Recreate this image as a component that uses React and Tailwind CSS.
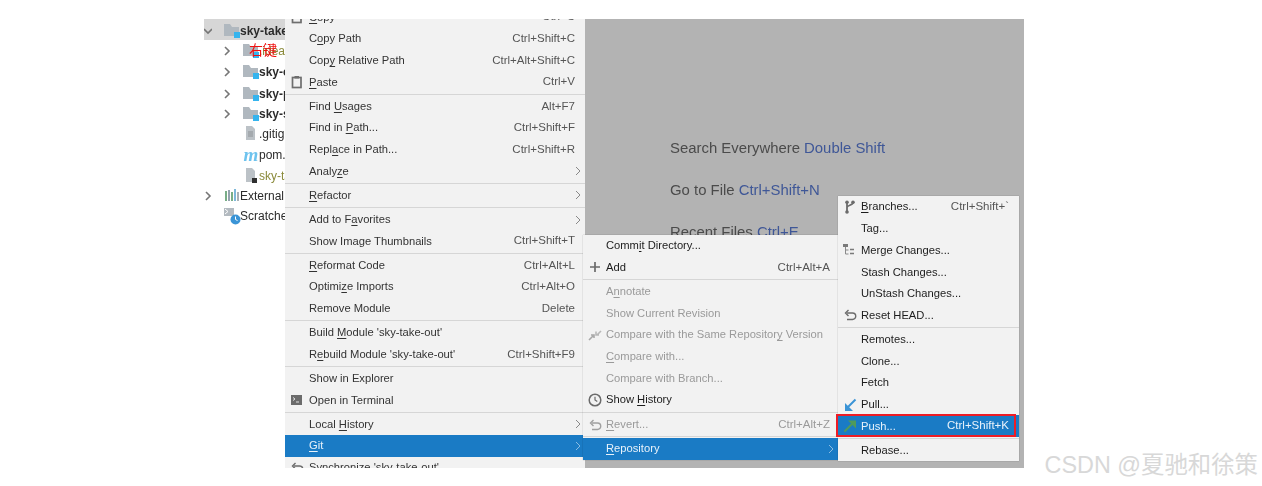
import React from "react";

const FONT = "font-['Liberation_Sans',Arial,sans-serif]";

// "_" marks the letter that gets the mnemonic underline
const Label = ({ text }) => {
  const i = text.indexOf("_");
  if (i < 0) return <span>{text}</span>;
  return (
    <span>
      {text.slice(0, i)}
      <span className="underline underline-offset-2">{text[i + 1]}</span>
      {text.slice(i + 2)}
    </span>
  );
};

const Chevron = () => (
  <svg width="6" height="10" viewBox="0 0 6 10" className="absolute right-[4px] top-[6px]">
    <path d="M1 1l4 4-4 4" fill="none" stroke="currentColor" strokeWidth="1" opacity="0.55" />
  </svg>
);

const Sep = ({ h = "h-[2.4px]" }) => <div className={`${h} flex items-center`}><div className="h-px w-full bg-[#d6d6d6]" /></div>;

const Row = ({ text, keys, icon, sub, active, disabled, dark, pad = "pl-[24px] pr-[10px]" }) => (
  <div
    className={`relative flex h-[21.7px] items-center justify-between whitespace-nowrap text-[11.2px] ${pad} ${
      active ? "bg-[#1a7bc5] text-[#e8f2fa]" : disabled ? "text-[#9a9a9a]" : dark ? "text-[#1c1c1c]" : "text-[#333333]"
    }`}
  >
    {icon && <span className="absolute left-[4px] top-[3px] flex h-4 w-4 items-center justify-center">{icon}</span>}
    <Label text={text} />
    {keys && <span className={`text-[11.5px] ${active ? "" : disabled ? "text-[#9a9a9a]" : "text-[#555555]"}`}>{keys}</span>}
    {sub && <Chevron />}
  </div>
);

const PasteIcon = () => (
  <svg width="12" height="14" viewBox="0 0 12 14">
    <rect x="1.5" y="2.5" width="8.5" height="10" fill="none" stroke="#6e6e6e" strokeWidth="1.7" />
    <rect x="3.5" y="1" width="4.5" height="2.5" fill="#6e6e6e" />
  </svg>
);
const TerminalIcon = () => (
  <svg width="12" height="12" viewBox="0 0 12 12">
    <rect width="11" height="10" y="1" fill="#6b6b6b" />
    <path d="M2 3.5l2 1.5-2 1.5M5 8h3" stroke="#eeeeee" strokeWidth="0.9" fill="none" />
  </svg>
);
const PlusIcon = () => (
  <svg width="12" height="12" viewBox="0 0 12 12">
    <path d="M6 1v10M1 6h10" stroke="#6b6b6b" strokeWidth="1.7" />
  </svg>
);
const ClockIcon = () => (
  <svg width="14" height="14" viewBox="0 0 14 14">
    <circle cx="7" cy="7" r="5.8" fill="none" stroke="#6b6b6b" strokeWidth="1.5" />
    <path d="M7 3.8V7l2.3 1.6" fill="none" stroke="#6b6b6b" strokeWidth="1.2" />
  </svg>
);
const UndoIcon = ({ color = "#6b6b6b" }) => (
  <svg width="13" height="12" viewBox="0 0 13 12">
    <path d="M3 4h5.5a3 3 0 0 1 0 6.5H3" fill="none" stroke={color} strokeWidth="1.4" />
    <path d="M4.5 1L1.5 4l3 3" fill="none" stroke={color} strokeWidth="1.4" />
  </svg>
);
const CompareIcon = () => (
  <svg width="14" height="14" viewBox="0 0 14 14">
    <path d="M1 12l4-4M3 7h3v3" fill="none" stroke="#a8a8a8" strokeWidth="1.6" />
    <path d="M13 3L9 7M8 3.5V7h3" fill="none" stroke="#b8b8b8" strokeWidth="1.6" />
  </svg>
);
const BranchIcon = () => (
  <svg width="12" height="14" viewBox="0 0 12 14">
    <path d="M3 2v10M9 2.5c0 3-6 2.5-6 5" fill="none" stroke="#6b6b6b" strokeWidth="1.8" />
    <circle cx="3" cy="2.2" r="1.8" fill="#6b6b6b" />
    <circle cx="3" cy="12" r="1.8" fill="#6b6b6b" />
    <circle cx="9" cy="2.2" r="1.8" fill="#6b6b6b" />
  </svg>
);
const MergeIcon = () => (
  <svg width="15" height="12" viewBox="0 0 15 12">
    <rect x="0" y="0" width="5" height="3" fill="#7a7a7a" />
    <path d="M2.5 3v7h3M2.5 6h3" stroke="#8a8a8a" fill="none" />
    <path d="M7 5.5h4M7 9.5h4" stroke="#7a7a7a" strokeWidth="1.6" />
  </svg>
);
const PullIcon = () => (
  <svg width="14" height="14" viewBox="0 0 14 14">
    <path d="M12.5 1.5L3 11" stroke="#3a94d6" strokeWidth="2" />
    <path d="M2 5v8h8z" fill="#3a94d6" />
  </svg>
);
const PushIcon = () => (
  <svg width="14" height="14" viewBox="0 0 14 14">
    <path d="M1.5 12.5L11 3" stroke="#4f9a5c" strokeWidth="2" />
    <path d="M5 1.5h8v8z" fill="#4f9a5c" />
  </svg>
);

const ModuleFolder = () => (
  <svg width="16" height="14" viewBox="0 0 16 14" className="shrink-0">
    <path d="M0 0h6l2 3h7v9H0z" fill="#b0b8bf" />
    <rect x="10" y="8" width="6" height="6" fill="#35b4ee" />
  </svg>
);
const FileIcon = ({ badge }) => (
  <svg width="14" height="15" viewBox="0 0 14 15" className="shrink-0">
    <path d="M2 0h6l3 3v11H2z" fill="#bcc2c7" />
    {!badge && <path d="M4 6h5M4 8h5M4 10h5" stroke="#8d9296" />}
    {badge && <rect x="8" y="10" width="5" height="5" fill="#2f2f2f" />}
  </svg>
);
const Arrow = ({ open }) => (
  <svg width="8" height="10" viewBox="0 0 8 10" className="shrink-0">
    <path d={open ? "M0 3l4 4 4-4" : "M2 1l4 4-4 4"} fill="none" stroke="#767676" strokeWidth="1.6" />
  </svg>
);
const LibIcon = () => (
  <svg width="15" height="14" viewBox="0 0 15 14" className="shrink-0">
    <path d="M1 2v10" stroke="#6aa57a" strokeWidth="1.8" />
    <path d="M4 1v11" stroke="#8a99a6" strokeWidth="1.8" />
    <path d="M7 3v9" stroke="#6aa57a" strokeWidth="1.8" />
    <path d="M10 0v12" stroke="#6fb1d6" strokeWidth="1.8" />
    <path d="M13 3v9" stroke="#a0a9b0" strokeWidth="1.8" />
  </svg>
);
const ScratchIcon = () => (
  <svg width="17" height="17" viewBox="0 0 17 17" className="shrink-0">
    <rect x="0" y="0" width="10" height="8" fill="#b3bac0" />
    <path d="M1 1l3 2.5-3 2.5" stroke="#ffffff" fill="none" />
    <circle cx="11.5" cy="11.5" r="5" fill="#3a94d6" />
    <path d="M11.5 8.5v3l2 1" stroke="#ffffff" fill="none" />
  </svg>
);

const TreeRow = ({ h, indent, arrow, open, icon, children }) => (
  <div className={`flex items-center whitespace-nowrap text-[12px] ${h} ${indent}`}>
    <span className="flex w-[20px] shrink-0">{arrow && <Arrow open={open} />}</span>
    <span className="flex w-[16px] shrink-0 justify-center">{icon}</span>
    <span>{children}</span>
  </div>
);

export default function App() {
  return (
    <div className={`relative h-[486px] w-[1262px] overflow-hidden bg-white pl-[204px] pt-[19px] ${FONT}`}>
      <div className="flex h-[449px] w-[820px] overflow-hidden bg-[#b3b3b3] blur-[0.3px]">
        {/* project tree */}
        <div className="w-[81px] shrink-0 overflow-hidden bg-white text-[#2b2b2b]">
          <TreeRow h="h-[21px] bg-[#d6d6d6] pt-[2px]" indent="pl-0" arrow open icon={<ModuleFolder />}><b>sky-take-out</b></TreeRow>
          <div className="relative h-[21px]">
            <TreeRow h="h-[21px]" indent="pl-[19px]" arrow icon={<ModuleFolder />}><span className="text-[#8a8a3a]">.idea</span></TreeRow>
            <span className="absolute left-[45px] top-0 font-['Noto_Sans_CJK_SC',sans-serif] text-[14px] leading-[18px] text-[#f01010]">右键</span>
          </div>
          <TreeRow h="h-[22px]" indent="pl-[19px]" arrow icon={<ModuleFolder />}><b>sky-common</b></TreeRow>
          <TreeRow h="h-[21px]" indent="pl-[19px]" arrow icon={<ModuleFolder />}><b>sky-pojo</b></TreeRow>
          <TreeRow h="h-[19px]" indent="pl-[19px]" arrow icon={<ModuleFolder />}><b>sky-server</b></TreeRow>
          <TreeRow h="h-[21px]" indent="pl-[19px]" icon={<FileIcon />}>.gitignore</TreeRow>
          <TreeRow h="h-[21px]" indent="pl-[19px]" icon={<span className="font-['Liberation_Serif',serif] text-[19px] font-bold italic leading-none text-[#6ec3ee]">m</span>}>pom.xml</TreeRow>
          <TreeRow h="h-[21px]" indent="pl-[19px]" icon={<FileIcon badge />}><span className="text-[#8a8a3a]">sky-take-out.iml</span></TreeRow>
          <TreeRow h="h-[20px]" indent="pl-0" arrow icon={<LibIcon />}>External Libraries</TreeRow>
          <TreeRow h="h-[20px]" indent="pl-0" arrow={false} icon={<ScratchIcon />}>Scratches</TreeRow>
        </div>

        {/* main context menu, cut off by the screenshot at top and bottom */}
        <div className="w-[300px] shrink-0 overflow-hidden bg-[#f2f2f2]">
          <div className="-mt-[12.8px]">
            <Row text="_Copy" keys="Ctrl+C" icon={<PasteIcon />} />
            <Row text="C_opy Path" keys="Ctrl+Shift+C" />
            <Row text="Cop_y Relative Path" keys="Ctrl+Alt+Shift+C" />
            <Row text="_Paste" keys="Ctrl+V" icon={<PasteIcon />} />
            <Sep />
            <Row text="Find _Usages" keys="Alt+F7" />
            <Row text="Find in _Path..." keys="Ctrl+Shift+F" />
            <Row text="Repl_ace in Path..." keys="Ctrl+Shift+R" />
            <Row text="Analy_ze" sub />
            <Sep />
            <Row text="_Refactor" sub />
            <Sep />
            <Row text="Add to F_avorites" sub />
            <Row text="Show Image Thumbnails" keys="Ctrl+Shift+T" />
            <Sep />
            <Row text="_Reformat Code" keys="Ctrl+Alt+L" />
            <Row text="Optimi_ze Imports" keys="Ctrl+Alt+O" />
            <Row text="Remove Module" keys="Delete" />
            <Sep />
            <Row text="Build _Module 'sky-take-out'" />
            <Row text="R_ebuild Module 'sky-take-out'" keys="Ctrl+Shift+F9" />
            <Sep />
            <Row text="Show in Explorer" />
            <Row text="Open in Terminal" icon={<TerminalIcon />} />
            <Sep />
            <Row text="Local _History" sub />
            <Row text="_Git" sub active />
            <Row text="Synchronize 'sky-take-out'" icon={<UndoIcon />} />
          </div>
        </div>

        {/* editor placeholder */}
        <div className="relative flex-1">
          <div className="flex flex-col gap-[22px] pl-[85px] pt-[119px] text-[14.9px] leading-[20px] text-[#4b4b4b]">
            <div>Search Everywhere <span className="text-[#3f5797]">Double Shift</span></div>
            <div>Go to File <span className="text-[#3f5797]">Ctrl+Shift+N</span></div>
            <div>Recent Files <span className="text-[#3f5797]">Ctrl+E</span></div>
          </div>

          {/* Git submenu */}
          <div className="absolute left-[-2px] top-[215.8px] w-[255px] bg-[#f2f2f2] shadow-[0_0_1px_rgba(0,0,0,0.35)]">
            <Row dark pad="pl-[23px] pr-[8px]" text="Comm_it Directory..." />
            <Row dark pad="pl-[23px] pr-[8px]" text="Add" keys="Ctrl+Alt+A" icon={<PlusIcon />} />
            <Sep />
            <Row disabled pad="pl-[23px] pr-[8px]" text="A_nnotate" />
            <Row disabled pad="pl-[23px] pr-[8px]" text="Show Current Revision" />
            <Row disabled pad="pl-[23px] pr-[8px]" text="Compare with the Same Repositor_y Version" icon={<CompareIcon />} />
            <Row disabled pad="pl-[23px] pr-[8px]" text="_Compare with..." />
            <Row disabled pad="pl-[23px] pr-[8px]" text="Compare with Branch..." />
            <Row dark pad="pl-[23px] pr-[8px]" text="Show _History" icon={<ClockIcon />} />
            <Sep h="h-[3px]" />
            <Row disabled pad="pl-[23px] pr-[8px]" text="_Revert..." keys="Ctrl+Alt+Z" icon={<UndoIcon color="#a0a0a0" />} />
            <Sep h="h-[2.5px]" />
            <Row active pad="pl-[23px] pr-[8px]" text="_Repository" sub />
          </div>

          {/* Repository submenu */}
          <div className="absolute left-[253px] top-[177px] w-[181px] bg-[#f2f2f2] shadow-[0_0_1px_rgba(0,0,0,0.35)]">
            <Row dark pad="pl-[23px] pr-[10px]" text="_Branches..." keys="Ctrl+Shift+`" icon={<BranchIcon />} />
            <Row dark pad="pl-[23px] pr-[10px]" text="Tag..." />
            <Row dark pad="pl-[23px] pr-[10px]" text="Merge Changes..." icon={<MergeIcon />} />
            <Row dark pad="pl-[23px] pr-[10px]" text="Stash Changes..." />
            <Row dark pad="pl-[23px] pr-[10px]" text="UnStash Changes..." />
            <Row dark pad="pl-[23px] pr-[10px]" text="Reset HEAD..." icon={<UndoIcon />} />
            <Sep />
            <Row dark pad="pl-[23px] pr-[10px]" text="Remotes..." />
            <Row dark pad="pl-[23px] pr-[10px]" text="Clone..." />
            <Row dark pad="pl-[23px] pr-[10px]" text="Fetch" />
            <Row dark pad="pl-[23px] pr-[10px]" text="Pull..." icon={<PullIcon />} />
            <Row active pad="pl-[23px] pr-[10px]" text="Push..." keys="Ctrl+Shift+K" icon={<PushIcon />} />
            <Sep />
            <Row dark pad="pl-[23px] pr-[10px]" text="Rebase..." />
            <div className="pointer-events-none absolute left-[-2px] top-[218px] h-[23px] w-[180px] border-2 border-[#ee1c25]" />
          </div>
        </div>
      </div>

      <div className="absolute bottom-[6px] right-[4px] whitespace-nowrap font-['Liberation_Sans','Noto_Sans_CJK_SC',sans-serif] text-[23.4px] leading-[30px] text-[#d8d8d8]">
        CSDN @夏驰和徐策
      </div>
    </div>
  );
}
